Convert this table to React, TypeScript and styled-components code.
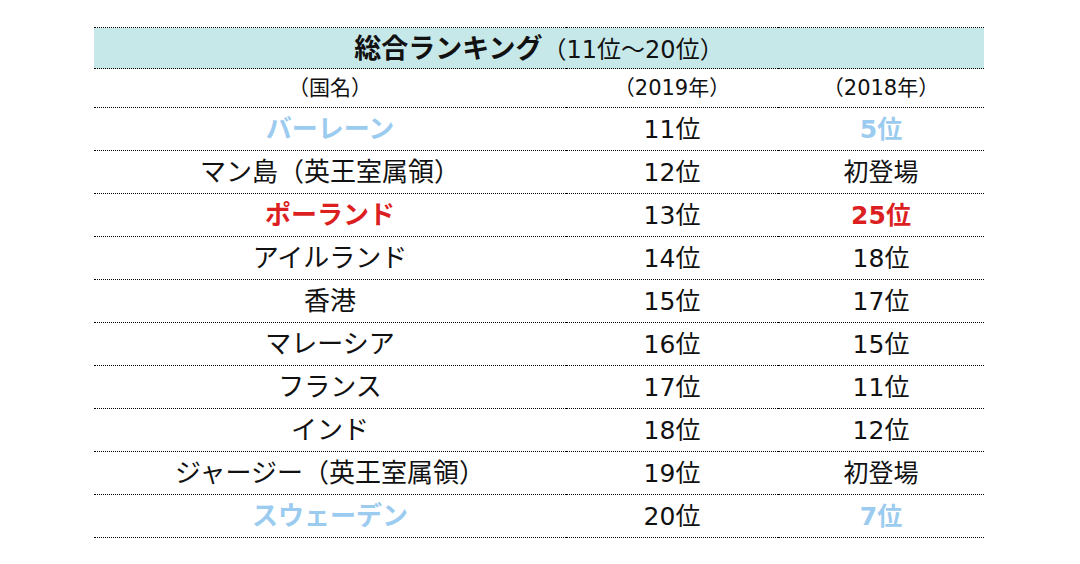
import * as React from "react";
import styled, { createGlobalStyle } from "styled-components";

const GlobalStyle = createGlobalStyle`
  html, body {
    margin: 0;
    padding: 0;
    background: #ffffff;
    font-family: "DejaVu Sans", "Noto Sans CJK JP", sans-serif;
    color: #111;
  }
`;

const Page = styled.div`
  width: 1080px;
  height: 564px;
  padding-top: 27px;
  box-sizing: border-box;
  display: flex;
  justify-content: center;
  align-items: flex-start;
`;

const Table = styled.table`
  width: 890px;
  margin-left: -2px;
  border-collapse: collapse;
  table-layout: fixed;
`;

const TitleCell = styled.th`
  height: 40px;
  padding: 0;
  background: #c6e8e9;
  border-top: 1px dotted #000;
  border-bottom: 1px dotted #000;
  font-size: 24px;
  font-weight: 400;
  line-height: 1;
  text-align: center;
`;

const TitleStrong = styled.span`
  font-size: 27px;
  font-weight: 700;
`;

const SubCell = styled.td`
  height: 38px;
  padding: 0;
  border-bottom: 1px dotted #000;
  font-size: 21px;
  text-align: center;
  line-height: 1;
`;

const Cell = styled.td<{ tone?: "red" | "blue"; wide?: boolean }>`
  height: 42px;
  padding: 0;
  border-bottom: 1px dotted #000;
  font-size: ${(p) => (p.wide ? "26px" : "25px")};
  line-height: 1;
  text-align: center;
  font-weight: ${(p) => (p.tone ? 700 : 400)};
  color: ${(p) =>
    p.tone === "red" ? "#dc1f1f" : p.tone === "blue" ? "#9ccbf0" : "#111"};
`;

type Row = {
  country: string;
  now: string;
  prev: string;
  tone?: "red" | "blue";
};

const rows: Row[] = [
  { country: "バーレーン", now: "11位", prev: "5位", tone: "blue" },
  { country: "マン島（英王室属領）", now: "12位", prev: "初登場" },
  { country: "ポーランド", now: "13位", prev: "25位", tone: "red" },
  { country: "アイルランド", now: "14位", prev: "18位" },
  { country: "香港", now: "15位", prev: "17位" },
  { country: "マレーシア", now: "16位", prev: "15位" },
  { country: "フランス", now: "17位", prev: "11位" },
  { country: "インド", now: "18位", prev: "12位" },
  { country: "ジャージー（英王室属領）", now: "19位", prev: "初登場" },
  { country: "スウェーデン", now: "20位", prev: "7位", tone: "blue" },
];

const App: React.FC = () => {
  return (
    <>
      <GlobalStyle />
      <Page>
        <Table>
          <colgroup>
            <col style={{ width: 472 }} />
            <col style={{ width: 212 }} />
            <col style={{ width: 206 }} />
          </colgroup>
          <thead>
            <tr>
              <TitleCell colSpan={3}>
                <TitleStrong>総合ランキング</TitleStrong>（11位～20位）
              </TitleCell>
            </tr>
            <tr>
              <SubCell>（国名）</SubCell>
              <SubCell>（2019年）</SubCell>
              <SubCell>（2018年）</SubCell>
            </tr>
          </thead>
          <tbody>
            {rows.map((r) => (
              <tr key={r.country}>
                <Cell wide tone={r.tone}>
                  {r.country}
                </Cell>
                <Cell>{r.now}</Cell>
                <Cell tone={r.tone}>{r.prev}</Cell>
              </tr>
            ))}
          </tbody>
        </Table>
      </Page>
    </>
  );
};

export default App;
